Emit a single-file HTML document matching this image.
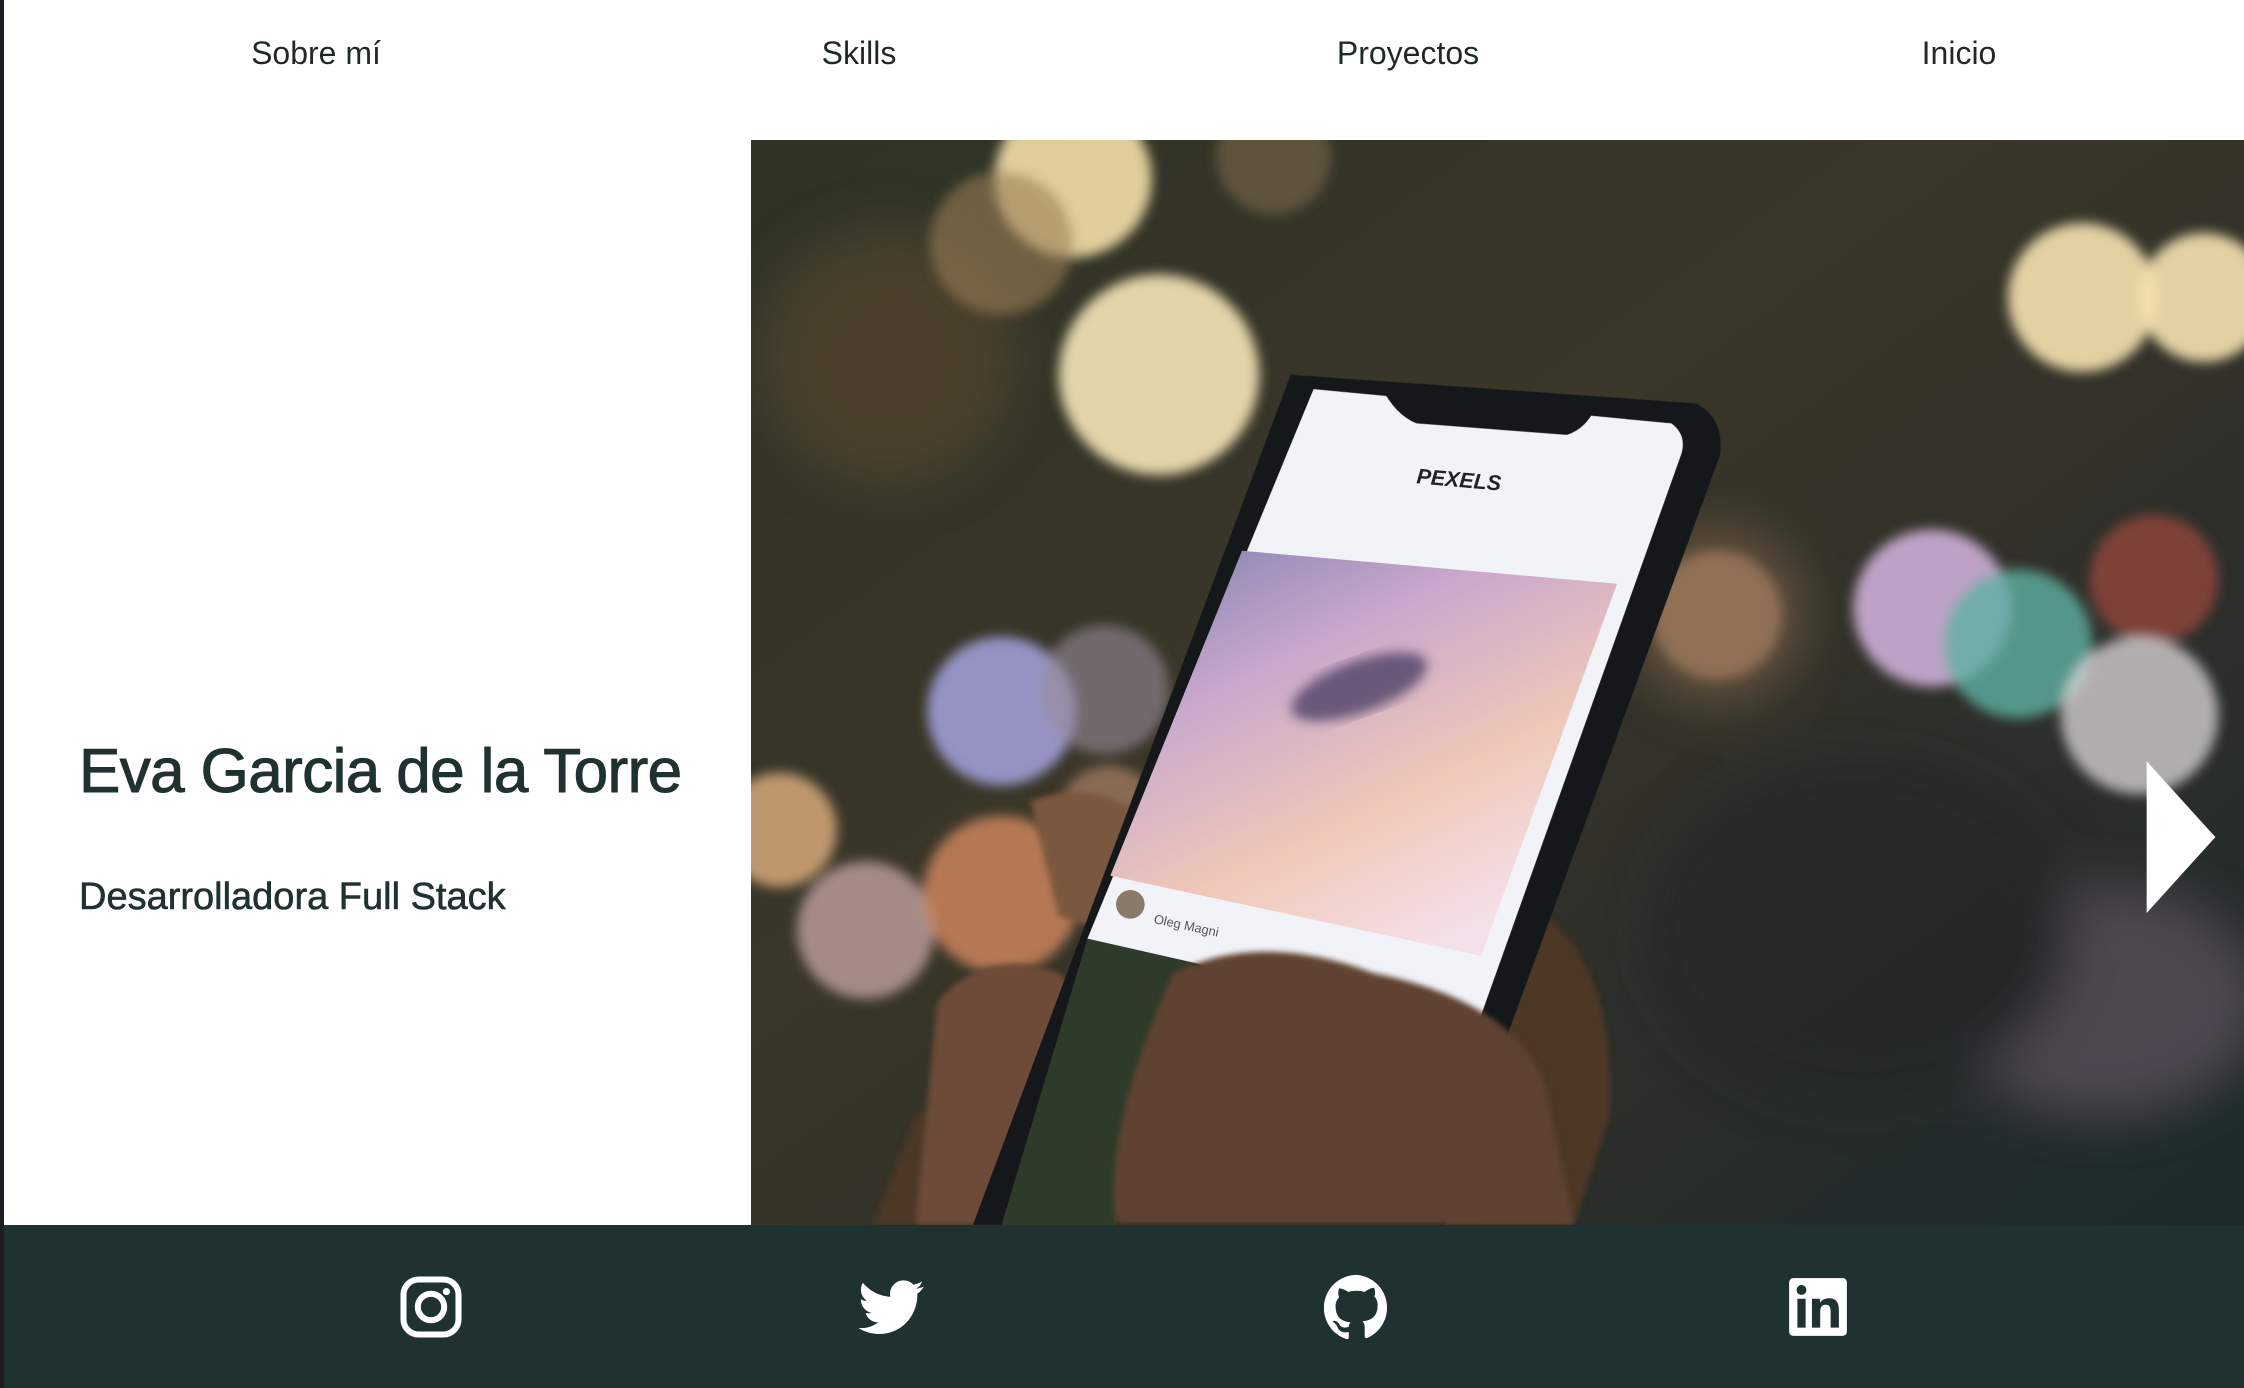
<!DOCTYPE html>
<html><head><meta charset="utf-8"><style>
*{margin:0;padding:0;box-sizing:border-box}
body{width:2244px;height:1388px;overflow:hidden;background:#fff;font-family:"Liberation Sans",Arial,sans-serif;position:relative}
.strip{position:absolute;left:0;top:0;width:4px;height:1388px;background:#1b1b22}
.nav{position:absolute;top:35px;font-size:32px;color:#1f2a28;transform:translateX(-50%);white-space:nowrap}
h1{position:absolute;left:79px;top:736px;font-size:62px;font-weight:normal;color:#1f3230;letter-spacing:-0.6px;-webkit-text-stroke:1px #1f3230;white-space:nowrap}
h2{position:absolute;left:79px;top:876px;font-size:38px;font-weight:normal;color:#1f3230;-webkit-text-stroke:0.6px #1f3230;white-space:nowrap}
svg.photo{position:absolute;left:751px;top:140px;width:1493px;height:1085px}
.foot{position:absolute;left:4px;top:1225px;width:2240px;height:163px;background:#1f3230}
.ic{position:absolute;top:1274px;width:66px;height:66px}
</style></head><body>
<div class="strip"></div>
<div class="nav" style="left:316px">Sobre mí</div>
<div class="nav" style="left:859px">Skills</div>
<div class="nav" style="left:1408px">Proyectos</div>
<div class="nav" style="left:1959px">Inicio</div>
<h1>Eva Garcia de la Torre</h1>
<h2>Desarrolladora Full Stack</h2>
<svg class="photo" viewBox="525 98 1043 758" preserveAspectRatio="none">
<defs>
<linearGradient id="bg" x1="0" y1="0" x2="1" y2="1">
<stop offset="0" stop-color="#2e3326"/><stop offset="0.4" stop-color="#3a3628"/><stop offset="0.7" stop-color="#2d2f2a"/><stop offset="1" stop-color="#1c2a2c"/></linearGradient>
<linearGradient id="scr" x1="0" y1="0" x2="0.6" y2="1">
<stop offset="0" stop-color="#7f7fb0"/><stop offset="0.35" stop-color="#c9a8cc"/><stop offset="0.7" stop-color="#f0c8b8"/><stop offset="1" stop-color="#f4e0e8"/></linearGradient>
<filter id="b"><feGaussianBlur stdDeviation="4"/></filter>
<filter id="b1"><feGaussianBlur stdDeviation="2"/></filter>
<filter id="b2"><feGaussianBlur stdDeviation="18"/></filter>
</defs>
<rect x="525" y="98" width="1043" height="758" fill="url(#bg)"/>
<g filter="url(#b2)" opacity="0.6">
<ellipse cx="1200" cy="430" rx="60" ry="60" fill="#8a6a50"/>
<ellipse cx="1470" cy="700" rx="110" ry="80" fill="#6a5a6a"/>
<ellipse cx="620" cy="250" rx="90" ry="90" fill="#5a4a32"/>
<ellipse cx="1300" cy="650" rx="150" ry="120" fill="#242826"/>
</g>
<g filter="url(#b)">
<circle cx="750" cy="125" r="55" fill="#f3dfa8" opacity="0.9"/>
<circle cx="700" cy="170" r="50" fill="#9a7f55" opacity="0.6"/>
<circle cx="890" cy="110" r="40" fill="#8a7458" opacity="0.5"/>
<circle cx="810" cy="262" r="70" fill="#f6e6b8" opacity="0.9"/>
<circle cx="1455" cy="208" r="52" fill="#f5e3b0" opacity="0.9"/>
<circle cx="1540" cy="208" r="45" fill="#f5e3b0" opacity="0.9"/>
<circle cx="700" cy="497" r="52" fill="#a6a4e0" opacity="0.85"/>
<circle cx="772" cy="482" r="45" fill="#9a8c9a" opacity="0.6"/>
<circle cx="1350" cy="425" r="55" fill="#d6b6e0" opacity="0.85"/>
<circle cx="1410" cy="450" r="52" fill="#5fb0a4" opacity="0.8"/>
<circle cx="1505" cy="405" r="45" fill="#a04a40" opacity="0.7"/>
<circle cx="1495" cy="500" r="55" fill="#e8e4e6" opacity="0.7"/>
<circle cx="1200" cy="430" r="45" fill="#b88a6a" opacity="0.55"/>
<circle cx="545" cy="580" r="40" fill="#e0b080" opacity="0.8"/>
<circle cx="605" cy="650" r="48" fill="#c8a8a8" opacity="0.75"/>
<circle cx="700" cy="625" r="55" fill="#d48a60" opacity="0.8"/>
<circle cx="775" cy="570" r="35" fill="#c09070" opacity="0.6"/>
</g>
<g filter="url(#b1)">
<path d="M610 856 L640 780 Q700 740 760 720 L1080 640 Q1130 680 1125 780 L1100 856Z" fill="#4e3828"/>
<path d="M655 700 Q690 660 740 680 L800 740 L760 856 L640 856Z" fill="#6d4c38"/>
<path d="M720 560 Q760 545 790 565 L800 660 L740 640Z" fill="#7a5840"/>
</g>
<path d="M902 262 L1185 282 Q1205 292 1202 318 L1040 760 L1010 856 L680 856 Z" fill="#15181a"/>
<path d="M918 272 L1168 296 Q1180 305 1174 320 L1032 718 L760 656 Z" fill="#f2f3f8"/>
<path d="M965 270 L1115 285 Q1108 300 1095 304 L990 296 Q975 290 965 270Z" fill="#15181a"/>
<text x="990" y="340" font-family="Liberation Sans" font-weight="bold" font-style="italic" font-size="15" fill="#222" transform="rotate(5 1015 335)">PEXELS</text>
<path d="M868 385 L1130 408 L1035 668 L776 612 Z" fill="url(#scr)"/>
<ellipse cx="950" cy="480" rx="50" ry="18" fill="#3a3058" opacity="0.7" transform="rotate(-20 950 480)" filter="url(#b)"/>
<path d="M760 656 L835 673 L780 856 L700 856Z" fill="#2e3a2a"/>
<text x="806" y="645" font-family="Liberation Sans" font-size="9" fill="#555" transform="rotate(12 806 645)">Oleg Magni</text>
<circle cx="790" cy="632" r="10" fill="#8a7a6a"/>
<path d="M820 680 Q880 650 960 680 Q1060 700 1080 760 L1100 856 L780 856 Q770 790 820 680Z" fill="#5e4230" filter="url(#b1)"/>
<path d="M1500 532 L1548 585 L1500 638Z" fill="#fff"/>
</svg>
<div class="foot"></div>
<svg class="ic" style="left:398px" viewBox="0 0 24 24"><rect x="2" y="2" width="20" height="20" rx="5.5" fill="none" stroke="#fff" stroke-width="2.2"/><circle cx="12" cy="12" r="4.8" fill="none" stroke="#fff" stroke-width="2.2"/><circle cx="17.6" cy="6.4" r="1.3" fill="#fff"/></svg>
<svg class="ic" style="left:859px" viewBox="0 0 24 24"><path fill="#fff" d="M23.6 4.6c-.9.4-1.8.6-2.8.8 1-.6 1.8-1.5 2.1-2.7-.9.6-2 1-3.1 1.2-.9-1-2.200-1.6-3.6-1.6-2.7 0-4.9 2.2-4.9 4.9 0 .4 0 .8.1 1.1C7.4 8.1 3.8 6.1 1.4 3.2c-.4.7-.7 1.6-.7 2.5 0 1.7.9 3.2 2.2 4.1-.8 0-1.6-.2-2.2-.6v.1c0 2.4 1.7 4.4 3.9 4.8-.4.1-.8.2-1.3.2-.3 0-.6 0-.9-.1.6 2 2.4 3.4 4.6 3.4-1.7 1.3-3.8 2.1-6.1 2.1-.4 0-.8 0-1.2-.1 2.2 1.4 4.8 2.2 7.5 2.2 9.1 0 14-7.5 14-14v-.6c1-.7 1.8-1.6 2.4-2.6z"/></svg>
<svg class="ic" style="left:1324px" viewBox="0 0 24 24"><path fill="#fff" d="M12 .3a12 12 0 0 0-3.8 23.4c.6.1.8-.3.8-.6v-2c-3.3.7-4-1.6-4-1.6-.6-1.4-1.4-1.800-1.4-1.8-1-.7.1-.7.1-.7 1.2.1 1.8 1.2 1.8 1.2 1 1.8 2.8 1.3 3.5 1 0-.8.4-1.3.7-1.6-2.700-.3-5.5-1.3-5.5-6 0-1.2.5-2.3 1.3-3.1-.2-.4-.6-1.6 0-3.2 0 0 1-.3 3.3 1.2a11.5 11.5 0 0 1 6 0C17.2 4.7 18.2 5 18.2 5c.7 1.6.2 2.9.1 3.2.8.8 1.2 1.9 1.2 3.1 0 4.6-2.8 5.6-5.5 5.9.4.4.8 1.1.8 2.2v3.3c0 .3.2.7.8.6A12 12 0 0 0 12 .3"/></svg>
<svg class="ic" style="left:1785px" viewBox="0 0 24 24"><rect x="1.5" y="1.5" width="21" height="21" rx="1.5" fill="#fff"/><rect x="4.5" y="9" width="3" height="10.5" fill="#1f3230"/><circle cx="6" cy="5.8" r="1.8" fill="#1f3230"/><path fill="#1f3230" d="M9.8 9h2.9v1.5c.5-.9 1.6-1.7 3.3-1.7 3 0 3.6 2 3.6 4.5v6.2h-3v-5.4c0-1.3 0-2.9-1.8-2.9s-2 1.4-2 2.8v5.5h-3z"/></svg>
</body></html>
